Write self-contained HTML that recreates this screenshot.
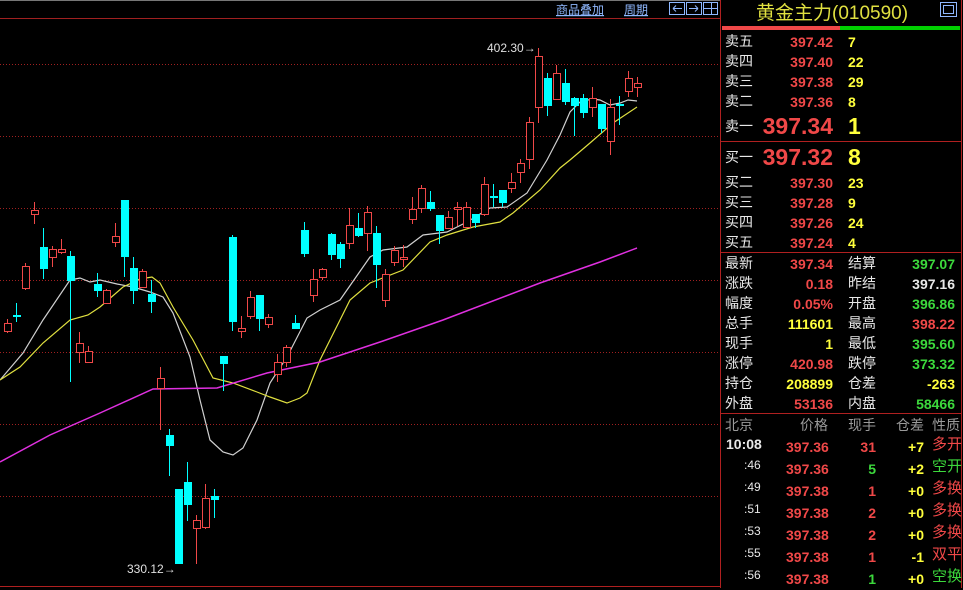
<!DOCTYPE html>
<html><head><meta charset="utf-8"><style>
html,body{margin:0;padding:0;background:#000;width:963px;height:588px;overflow:hidden;font-family:"Liberation Sans","Noto Sans CJK SC",sans-serif}
.a{position:absolute;white-space:nowrap;line-height:1}
.w{color:#e8e8e8}.r{color:#f04848}.y{color:#ffff3c}.g{color:#3cd83c}.gr{color:#9a9a9a}
.l{font-size:14px}
.pr{font-size:14px;font-weight:bold;text-align:right;width:80px}
</style></head><body>
<svg width="963" height="588" style="position:absolute;left:0;top:0">
<line x1="0" y1="0.5" x2="720" y2="0.5" stroke="#777"/>
<line x1="0" y1="18.5" x2="720" y2="18.5" stroke="#a02020"/>
<line x1="0" y1="586.5" x2="720" y2="586.5" stroke="#b02020"/>
<line x1="720.5" y1="0" x2="720.5" y2="588" stroke="#b02020"/>
<line x1="961.5" y1="0" x2="961.5" y2="588" stroke="#b02020"/>
<g stroke="#a02020" stroke-dasharray="1,2">
<line x1="0" y1="64.5" x2="720" y2="64.5"/><line x1="0" y1="136.5" x2="720" y2="136.5"/>
<line x1="0" y1="208.5" x2="720" y2="208.5"/><line x1="0" y1="280.5" x2="720" y2="280.5"/>
<line x1="0" y1="352.5" x2="720" y2="352.5"/><line x1="0" y1="424.5" x2="720" y2="424.5"/>
<line x1="0" y1="496.5" x2="720" y2="496.5"/>
</g>
<g fill="none" stroke-width="1.2">
<polyline stroke="#d0d0d0" points="0,380 23,353 43,320 70,280 80,278 90,282 100,280 117,284 133,287 150,292 163,297 173,313 190,357 200,400 210,440 223,452 233,455 243,448 257,420 270,383 287,357 307,318 320,310 340,300 370,257 383,250 407,247 423,235 447,232 467,222 490,208 507,207 527,193 547,160 560,135 570,112 580,102 592,99 600,100 610,105 620,103 628,100 637,101"/>
<polyline stroke="#e0e040" points="0,380 20,367 43,343 70,320 88,315 100,307 123,287 140,279 152,277 160,283 173,307 193,340 213,378 233,383 257,392 270,397 287,403 300,398 307,393 320,360 340,320 350,300 370,283 403,270 430,242 447,235 473,227 500,222 513,213 540,190 560,168 570,160 590,143 613,123 637,107"/>
<polyline stroke="#e030e0" stroke-width="1.5" points="0,462 50,435 100,413 153,389 217,388 267,373 320,362 380,342 443,320 540,283 600,262 637,248"/>
</g>
<g id="c"></g>
<text x="487" y="52" fill="#e0e0e0" font-size="12" font-family="Liberation Sans">402.30→</text>
<text x="127" y="573" fill="#e0e0e0" font-size="12" font-family="Liberation Sans">330.12→</text>
<text x="556" y="14" fill="#8fb8ff" font-size="12" text-decoration="underline" font-family="Liberation Sans,Noto Sans CJK SC,sans-serif">商品叠加</text>
<text x="624" y="14" fill="#8fb8ff" font-size="12" text-decoration="underline" font-family="Liberation Sans,Noto Sans CJK SC,sans-serif">周期</text>
<g fill="none" stroke="#8fb8ff">
<rect x="669.5" y="2.5" width="15" height="12"/><rect x="686.5" y="2.5" width="15" height="12"/><rect x="703.5" y="2.5" width="14" height="12"/>
<path d="M673 8.5h9M673 8.5l3-3M673 8.5l3 3M698 8.5h-9M698 8.5l-3-3M698 8.5l-3 3M711.5 3v11M704 8.5h13"/>
<rect x="940.5" y="2.5" width="16" height="14"/><rect x="943.5" y="5.5" width="10" height="8"/>
</g>
<rect x="722" y="26" width="118" height="4" fill="#f04848"/><rect x="840" y="26" width="120" height="4" fill="#00d000"/>
<g stroke="#b02020"><line x1="721" y1="141.5" x2="961" y2="141.5"/><line x1="721" y1="252.5" x2="961" y2="252.5"/><line x1="721" y1="413.5" x2="961" y2="413.5"/></g>
</svg>
<script>
var d=[[7,'r',319,333,323,331],[16,'c',303,322,315,316],[25,'r',263,290,266,288],[34,'r',202,224,210,214],[43,'c',228,279,247,268],[52,'r',246,267,249,257],[61,'r',239,254,249,252],[70,'c',251,382,256,280],[79,'r',332,363,343,352],[88,'r',346,363,351,362],[97,'c',273,297,284,290],[106,'r',289,303,290,303],[115,'r',223,247,236,242],[124,'c',200,277,200,256],[133,'c',257,304,268,290],[142,'r',269,288,271,287],[151,'c',280,313,294,301],[160,'r',367,430,378,388],[169,'c',429,476,435,445],[178,'c',489,564,489,563],[187,'c',462,521,482,504],[196,'r',515,564,520,528],[205,'r',484,529,498,527],[214,'c',489,518,496,499],[223,'c',356,391,356,363],[232,'c',235,331,237,321],[241,'r',316,338,328,331],[250,'r',291,319,297,316],[259,'c',295,331,295,318],[268,'r',314,328,317,324],[277,'r',354,382,362,374],[286,'r',345,367,347,362],[295,'c',315,328,323,328],[304,'c',222,257,230,253],[313,'r',269,302,279,295],[322,'r',268,280,269,277],[331,'c',233,260,234,254],[340,'c',242,268,244,258],[349,'r',208,249,225,243],[358,'c',213,237,228,235],[367,'r',206,251,212,233],[376,'c',226,288,233,264],[385,'r',269,307,274,300],[394,'r',246,266,250,262],[403,'r',245,267,257,259],[412,'r',197,224,209,219],[421,'r',185,213,188,208],[430,'c',191,211,202,208],[439,'c',215,244,215,230],[448,'r',211,228,217,228],[457,'r',202,226,207,209],[466,'r',202,227,207,227],[475,'c',214,228,214,222],[484,'r',177,216,184,214],[493,'c',184,207,196,197],[502,'c',190,207,190,202],[511,'r',173,193,182,188],[520,'r',159,183,163,172],[529,'r',117,169,122,159],[538,'r',48,123,56,107],[547,'c',73,116,78,105],[556,'r',65,100,73,99],[565,'c',69,105,83,101],[574,'c',97,136,98,105],[583,'c',94,118,98,112],[592,'r',87,117,98,107],[601,'c',104,133,104,128],[610,'r',99,155,107,141],[619,'c',96,125,104,105],[628,'r',71,97,78,91],[637,'r',77,97,83,87]];
var s='';d.forEach(function(e){var x=e[0],col=e[1]=='r'?'#f04848':'#00ffff';s+='<line x1="'+(x+.5)+'" y1="'+e[2]+'" x2="'+(x+.5)+'" y2="'+e[3]+'" stroke="'+col+'"/>';var h=Math.max(1,e[5]-e[4]);if(e[1]=='r'){s+='<rect x="'+(x-3+.5)+'" y="'+(e[4]+.5)+'" width="7" height="'+h+'" fill="#000" stroke="'+col+'"/>';}else{s+='<rect x="'+(x-3)+'" y="'+e[4]+'" width="8" height="'+(h+1)+'" fill="'+col+'"/>';}});
document.getElementById('c').innerHTML=s;
</script>
<div class="a" style="left:756px;top:4px;font-size:19px;color:#e0e040">黄金主力(010590)</div>
<div class="a w l" style="left:725px;top:34px">卖五</div><div class="a r pr" style="left:753px;top:35px">397.42</div><div class="a y l" style="left:848px;top:35px;font-weight:bold">7</div>
<div class="a w l" style="left:725px;top:54px">卖四</div><div class="a r pr" style="left:753px;top:55px">397.40</div><div class="a y l" style="left:848px;top:55px;font-weight:bold">22</div>
<div class="a w l" style="left:725px;top:74px">卖三</div><div class="a r pr" style="left:753px;top:75px">397.38</div><div class="a y l" style="left:848px;top:75px;font-weight:bold">29</div>
<div class="a w l" style="left:725px;top:94px">卖二</div><div class="a r pr" style="left:753px;top:95px">397.36</div><div class="a y l" style="left:848px;top:95px;font-weight:bold">8</div>
<div class="a w l" style="left:725px;top:119px">卖一</div><div class="a r" style="left:753px;top:115px;width:80px;text-align:right;font-size:23px;font-weight:bold">397.34</div><div class="a y" style="left:848px;top:115px;font-size:23px;font-weight:bold">1</div>
<div class="a w l" style="left:725px;top:150px">买一</div><div class="a r" style="left:753px;top:146px;width:80px;text-align:right;font-size:23px;font-weight:bold">397.32</div><div class="a y" style="left:848px;top:146px;font-size:23px;font-weight:bold">8</div>
<div class="a w l" style="left:725px;top:175px">买二</div><div class="a r pr" style="left:753px;top:176px">397.30</div><div class="a y l" style="left:848px;top:176px;font-weight:bold">23</div>
<div class="a w l" style="left:725px;top:195px">买三</div><div class="a r pr" style="left:753px;top:196px">397.28</div><div class="a y l" style="left:848px;top:196px;font-weight:bold">9</div>
<div class="a w l" style="left:725px;top:215px">买四</div><div class="a r pr" style="left:753px;top:216px">397.26</div><div class="a y l" style="left:848px;top:216px;font-weight:bold">24</div>
<div class="a w l" style="left:725px;top:235px">买五</div><div class="a r pr" style="left:753px;top:236px">397.24</div><div class="a y l" style="left:848px;top:236px;font-weight:bold">4</div>
<div class="a w l" style="left:725px;top:256px">最新</div><div class="a r pr" style="left:753px;top:257px">397.34</div><div class="a w l" style="left:848px;top:256px">结算</div><div class="a g pr" style="left:875px;top:257px">397.07</div>
<div class="a w l" style="left:725px;top:276px">涨跌</div><div class="a r pr" style="left:753px;top:277px">0.18</div><div class="a w l" style="left:848px;top:276px">昨结</div><div class="a w pr" style="left:875px;top:277px">397.16</div>
<div class="a w l" style="left:725px;top:296px">幅度</div><div class="a r pr" style="left:753px;top:297px">0.05%</div><div class="a w l" style="left:848px;top:296px">开盘</div><div class="a g pr" style="left:875px;top:297px">396.86</div>
<div class="a w l" style="left:725px;top:316px">总手</div><div class="a y pr" style="left:753px;top:317px">111601</div><div class="a w l" style="left:848px;top:316px">最高</div><div class="a r pr" style="left:875px;top:317px">398.22</div>
<div class="a w l" style="left:725px;top:336px">现手</div><div class="a y pr" style="left:753px;top:337px">1</div><div class="a w l" style="left:848px;top:336px">最低</div><div class="a g pr" style="left:875px;top:337px">395.60</div>
<div class="a w l" style="left:725px;top:356px">涨停</div><div class="a r pr" style="left:753px;top:357px">420.98</div><div class="a w l" style="left:848px;top:356px">跌停</div><div class="a g pr" style="left:875px;top:357px">373.32</div>
<div class="a w l" style="left:725px;top:376px">持仓</div><div class="a y pr" style="left:753px;top:377px">208899</div><div class="a w l" style="left:848px;top:376px">仓差</div><div class="a y pr" style="left:875px;top:377px">-263</div>
<div class="a w l" style="left:725px;top:396px">外盘</div><div class="a r pr" style="left:753px;top:397px">53136</div><div class="a w l" style="left:848px;top:396px">内盘</div><div class="a g pr" style="left:875px;top:397px">58466</div>
<div class="a gr l" style="left:725px;top:418px">北京</div><div class="a gr l" style="left:800px;top:418px">价格</div><div class="a gr l" style="left:848px;top:418px">现手</div><div class="a gr l" style="left:896px;top:418px">仓差</div><div class="a gr l" style="left:932px;top:418px">性质</div>
<div class="a w" style="left:726px;top:437px;font-size:14px;font-weight:bold">10:08</div>
<div class="a w" style="left:744px;top:459px;font-size:12px">:46</div>
<div class="a w" style="left:744px;top:481px;font-size:12px">:49</div>
<div class="a w" style="left:744px;top:503px;font-size:12px">:51</div>
<div class="a w" style="left:744px;top:525px;font-size:12px">:53</div>
<div class="a w" style="left:744px;top:547px;font-size:12px">:55</div>
<div class="a w" style="left:744px;top:569px;font-size:12px">:56</div>
<div class="a r" style="left:786px;top:436px;font-size:14px;font-weight:bold;line-height:22px">397.36<br>397.36<br>397.38<br>397.38<br>397.38<br>397.38<br>397.38</div>
<div class="a" style="left:836px;top:436px;width:40px;text-align:right;font-size:14px;font-weight:bold;line-height:22px"><span class="r">31</span><br><span class="g">5</span><br><span class="r">1</span><br><span class="r">2</span><br><span class="r">2</span><br><span class="r">1</span><br><span class="g">1</span></div>
<div class="a y" style="left:884px;top:436px;width:40px;text-align:right;font-size:14px;font-weight:bold;line-height:22px">+7<br>+2<br>+0<br>+0<br>+0<br>-1<br>+0</div>
<div class="a" style="left:932px;top:434px;font-size:15px;line-height:22px"><span class="r">多开</span><br><span class="g">空开</span><br><span class="r">多换</span><br><span class="r">多换</span><br><span class="r">多换</span><br><span class="r">双平</span><br><span class="g">空换</span></div>
</body></html>
